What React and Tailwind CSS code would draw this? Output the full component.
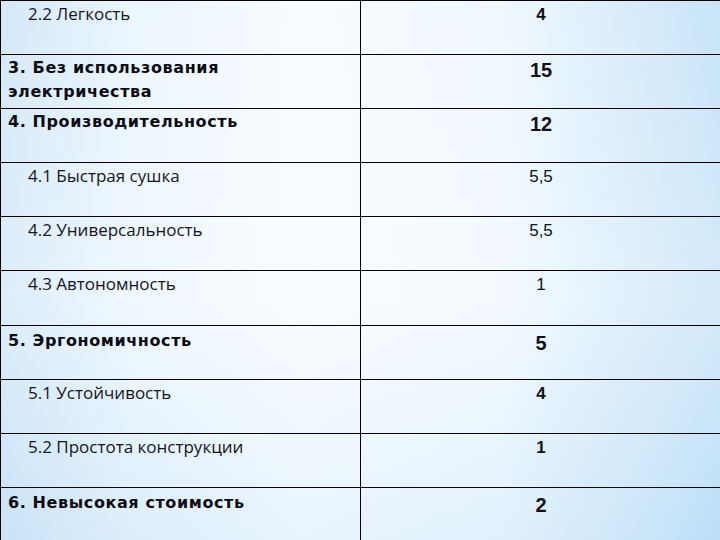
const rows = [
  { label: '2.2 Легкость', value: '4', kind: 'sub', strongValue: true },
  { label: ['3. Без использования', 'электричества'], value: '15', kind: 'main' },
  { label: '4. Производительность', value: '12', kind: 'main' },
  { label: '4.1 Быстрая сушка', value: '5,5', kind: 'sub' },
  { label: '4.2 Универсальность', value: '5,5', kind: 'sub' },
  { label: '4.3 Автономность', value: '1', kind: 'sub' },
  { label: '5. Эргономичность', value: '5', kind: 'main', lower: true },
  { label: '5.1 Устойчивость', value: '4', kind: 'sub', strongValue: true },
  { label: '5.2 Простота конструкции', value: '1', kind: 'sub', strongValue: true },
  { label: '6. Невысокая стоимость', value: '2', kind: 'main', lower: true },
]

function LabelCell({ row }) {
  const lines = Array.isArray(row.label) ? row.label : [row.label]
  if (row.kind === 'main') {
    return (
      <div
        className={`pl-[7px] font-bold text-[16px] leading-[24px] tracking-[0.6px] text-[#0b0b14] ${row.lower ? 'pt-[3px]' : 'pt-[1px]'}`}
        style={{ fontFamily: '"DejaVu Sans", sans-serif' }}
      >
        {lines.map((l) => (
          <div key={l}>{l}</div>
        ))}
      </div>
    )
  }
  return (
    <div
      className="pl-[27px] pt-[1px] text-[17px] leading-[24px] text-[#15151f]"
      style={{ fontFamily: '"Open Sans", sans-serif' }}
    >
      {lines[0]}
    </div>
  )
}

function ValueCell({ row }) {
  const main = row.kind === 'main'
  return (
    <div
      className={`text-center text-[#101018] leading-[24px] ${main ? 'font-bold text-[20px]' : 'text-[17px] pt-[2px]'} ${main && row.lower ? 'pt-[5px]' : ''} ${main && !row.lower ? 'pt-[3px]' : ''} ${row.strongValue ? 'font-bold' : ''}`}
      style={{ fontFamily: '"Liberation Sans", Arial, sans-serif' }}
    >
      {row.value}
    </div>
  )
}

export default function App() {
  return (
    <div className="relative h-[540px] w-[720px] overflow-hidden bg-[linear-gradient(90deg,#cce4f7_0%,#e7f4fd_18%,#f6fbff_42%,#edf7fe_70%,#bddff7_100%)]">
      <div className="absolute inset-0 bg-[linear-gradient(180deg,rgba(255,255,255,0.15)_0%,rgba(255,255,255,0.35)_55%,rgba(190,222,246,0.25)_100%)]" />
      <div className="relative grid grid-cols-[360px_360px] border-l border-black">
        {rows.map((row, i) => (
          <div key={i} className="contents">
            <div className="h-[54.1px] border-t border-r border-black">
              <LabelCell row={row} />
            </div>
            <div className="h-[54.1px] border-t border-black">
              <ValueCell row={row} />
            </div>
          </div>
        ))}
      </div>
    </div>
  )
}
